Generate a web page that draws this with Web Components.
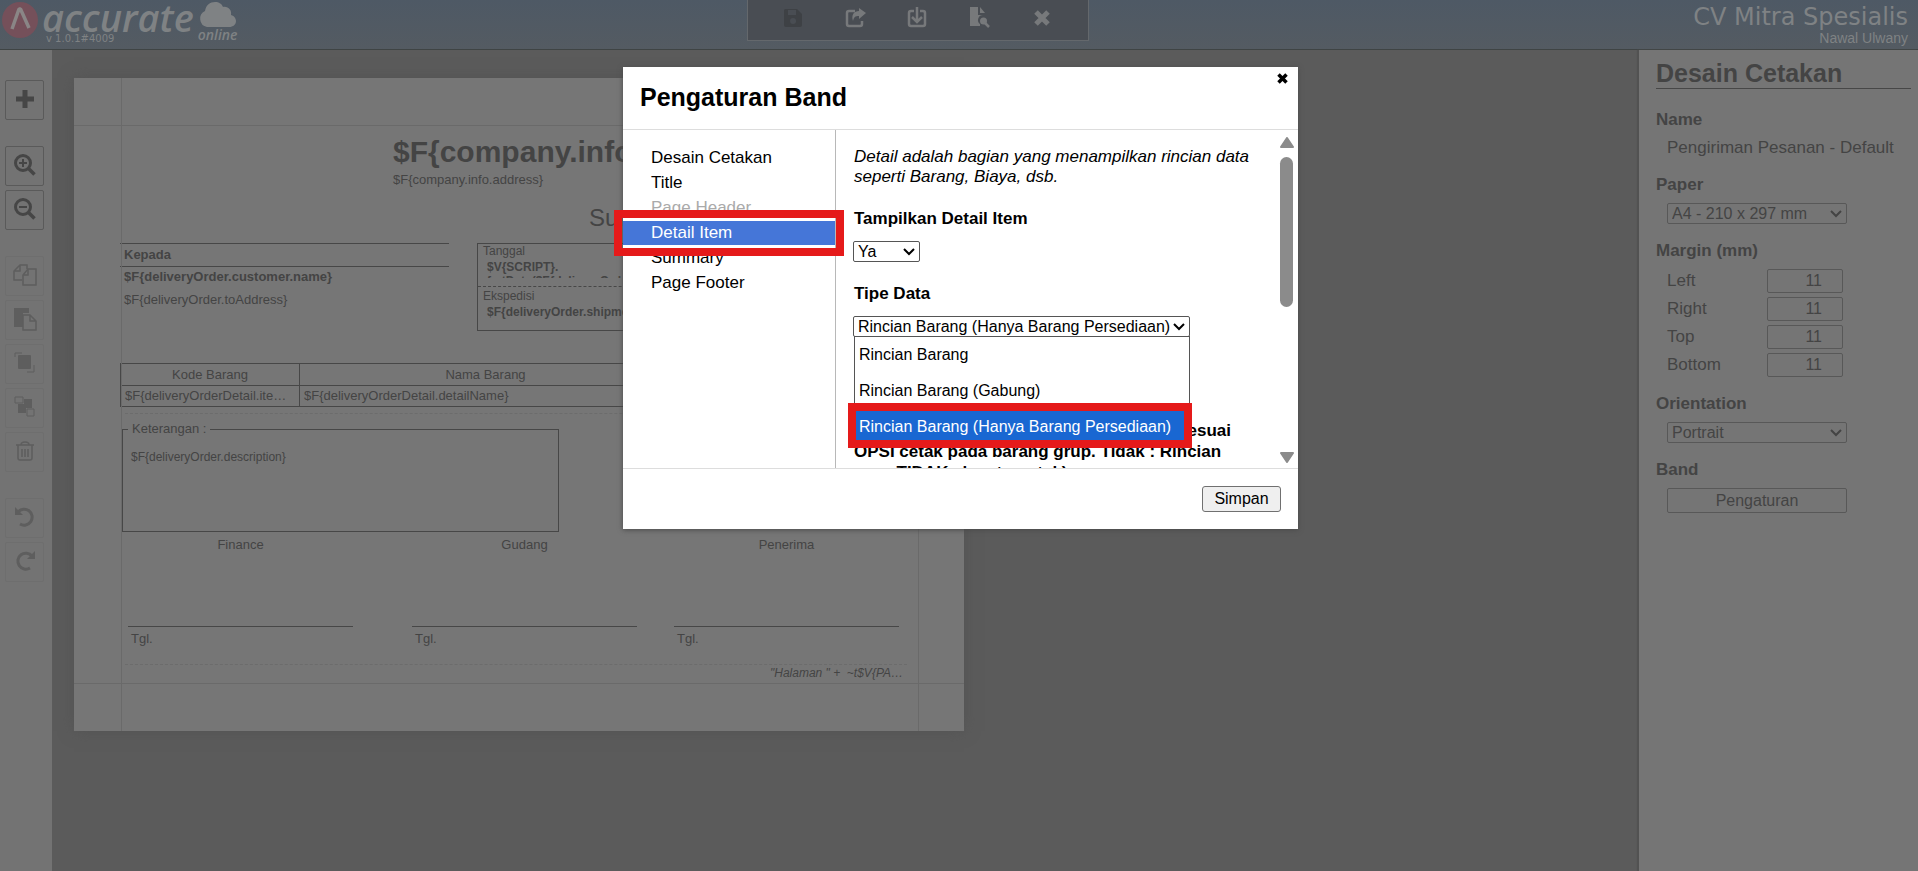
<!DOCTYPE html>
<html lang="id">
<head>
    <meta charset="UTF-8">
    <meta name="viewport" content="width=device-width, initial-scale=1.0">
    <title>Desain Cetakan</title>
    <style>
        :root {
            --tinta: #444444;
            --kertas: #767676;
            --garis: #474747;
        }

        body {
            margin: 0;
            min-height: 100vh;
            background: #5b5b5b;
            color: var(--tinta);
            font-family: "Liberation Sans", Arial, sans-serif;
            font-size: 17px;
        }
    </style>
</head>
<body>
    <halaman-desain></halaman-desain>

    <script>
        class HalamanDesain extends HTMLElement {
            constructor() {
                super();
                this._shadow = this.attachShadow({ mode: 'open' });
            }

            connectedCallback() {
                this._shadow.innerHTML = `<style>
                    :host {
                        display: flex;
                        flex-direction: column;
                        min-height: 100vh;
                    }

                    .isi {
                        flex: 1;
                        display: flex;
                    }

                    main {
                        flex: 1;
                        padding: 28px 22px;
                    }
                </style>
                <barra-atas></barra-atas>
                <div class="isi">
                    <alat-samping></alat-samping>
                    <main><kertas-cetak></kertas-cetak></main>
                    <panel-properti></panel-properti>
                </div>
                <dialog-band judul="Pengaturan Band"></dialog-band>
                `;
            }
        }

        class BarraAtas extends HTMLElement {
            constructor() {
                super();
                this._shadow = this.attachShadow({ mode: 'open' });
            }

            connectedCallback() {
                this._shadow.innerHTML = `<style>
                    :host {
                        display: grid;
                        grid-template-columns: 9fr 342px 10fr;
                        height: 49px;
                        background: linear-gradient(#4e5965, #545b62);
                        border-bottom: 1px solid #3f4444;
                        color: #7f8284;
                    }

                    .logo {
                        display: flex;
                        gap: 4px;
                        padding-left: 2px;
                    }

                    .logo > svg {
                        margin-top: 2px;
                    }

                    .merek {
                        display: flex;
                        flex-direction: column;
                    }

                    .nama {
                        font: italic 600 38px/34px "Open Sans", "Noto Sans", sans-serif;
                    }

                    .versi {
                        font: 10px/10px "DejaVu Sans", sans-serif;
                        padding-left: 4px;
                    }

                    .awan {
                        display: flex;
                        flex-direction: column;
                        padding-top: 2px;
                    }

                    .awan span {
                        font: italic 600 14px/14px "Open Sans", sans-serif;
                    }

                    nav {
                        display: flex;
                        justify-content: space-around;
                        height: 41px;
                        padding: 0 14px;
                        box-sizing: border-box;
                        background: #494d53;
                        border: 1px solid #64686c;
                        border-top: 0;
                    }

                    button {
                        width: 60px;
                        padding: 0 0 5px 0;
                        border: 0;
                        background: none;
                        color: #77797b;
                        display: flex;
                        align-items: center;
                        justify-content: center;
                    }

                    button:disabled {
                        color: #3e4145;
                    }

                    .akun {
                        text-align: right;
                        padding: 3px 10px 0 0;
                    }

                    .perusahaan {
                        font: 24px/28px "DejaVu Sans", Verdana, sans-serif;
                    }

                    .pengguna {
                        font-size: 14px;
                        line-height: 14px;
                    }
                </style>
                <div class="logo">
                    <svg width="36" height="36" viewBox="0 0 36 36"><circle cx="18" cy="18" r="18" fill="#75505a"/><path d="M10 27 17 7 18.500 7 27 26" fill="none" stroke="#8a8686" stroke-width="3.500" stroke-linejoin="bevel"/></svg>
                    <div class="merek">
                        <span class="nama">accurate</span>
                        <span class="versi">v 1.0.1#4009</span>
                    </div>
                    <div class="awan">
                        <svg width="40" height="26" viewBox="0 0 40 26"><path d="M9 25a8.500 8.500 0 0 1-2-16C8 3 12 0 17 0c4 0 7 2 8 5 5-1 9 3 8 8 7 2 7 12-2 12Z" fill="currentColor"/></svg>
                        <span>online</span>
                    </div>
                </div>
                <nav>
                    <button disabled aria-label="Simpan"><svg width="20" height="20" viewBox="0 0 20 20"><path d="M2 1h12l5 5v11a2 2 0 0 1-2 2H3a2 2 0 0 1-2-2V2Zm3 1v5h8V2Zm5 8a3 3 0 1 0 .1 6 3 3 0 0 0-.1-6Z" fill="currentColor" fill-rule="evenodd"/></svg></button>
                    <button aria-label="Bagikan"><svg width="21" height="20" viewBox="0 0 21 20"><path d="M10 3H4a2 2 0 0 0-2 2v11a2 2 0 0 0 2 2h11a2 2 0 0 0 2-2v-3" fill="none" stroke="currentColor" stroke-width="2.500"/><path d="M14 0l7 5-7 6V8c-4 0-5 1-6 5-2-6 1-10 6-10Z" fill="currentColor"/></svg></button>
                    <button aria-label="Unduh"><svg width="20" height="21" viewBox="0 0 20 21"><path d="M7 4H4a2 2 0 0 0-2 2v11a2 2 0 0 0 2 2h12a2 2 0 0 0 2-2V6a2 2 0 0 0-2-2h-3M10 0v14M5 10l5 5 5-5" fill="none" stroke="currentColor" stroke-width="2.500"/></svg></button>
                    <button aria-label="Pratinjau"><svg width="21" height="21" viewBox="0 0 21 21"><path d="M1 0h8v8h5a5 5 0 0 0-3 9v2H1Z" fill="currentColor"/><path d="M11 0l5 6h-5Z" fill="currentColor"/><circle cx="14.500" cy="14" r="3.500" fill="currentColor"/><path d="M16 16l4 4" stroke="currentColor" stroke-width="2.500"/></svg></button>
                    <button aria-label="Tutup"><svg width="18" height="18" viewBox="0 0 18 18"><path d="M3 3l12 12M15 3L3 15" stroke="currentColor" stroke-width="5"/></svg></button>
                </nav>
                <div class="akun">
                    <div class="perusahaan">CV Mitra Spesialis</div>
                    <div class="pengguna">Nawal Ulwany</div>
                </div>
                `;
            }
        }

        class AlatSamping extends HTMLElement {
            constructor() {
                super();
                this._shadow = this.attachShadow({ mode: 'open' });
            }

            connectedCallback() {
                this._shadow.innerHTML = `<style>
                    :host {
                        display: flex;
                        flex-direction: column;
                        gap: 26px;
                        width: 52px;
                        padding: 30px 0 0 5px;
                        box-sizing: border-box;
                        background: #737373;
                    }

                    .grup {
                        display: flex;
                        flex-direction: column;
                        gap: 4px;
                    }

                    button {
                        width: 39px;
                        height: 40px;
                        padding: 0 0 3px 0;
                        border: 1px solid #5a5a5a;
                        border-radius: 2px;
                        background: none;
                        color: #464646;
                        display: flex;
                        align-items: center;
                        justify-content: center;
                    }

                    button:disabled {
                        color: #5e5e5e;
                        border-color: #6e6e6e;
                    }

                    svg {
                        fill: none;
                        stroke: currentColor;
                        stroke-width: 2;
                    }
                </style>
                <div class="grup">
                    <button aria-label="Tambah"><svg width="18" height="18" viewBox="0 0 18 18"><path d="M9 0v18M0 9h18" stroke-width="5"/></svg></button>
                </div>
                <div class="grup">
                    <button aria-label="Perbesar"><svg width="22" height="22" viewBox="0 0 22 22"><circle cx="9" cy="9" r="7.500" stroke-width="3"/><path d="M14.500 14.500l6 6" stroke-width="3.500"/><path d="M9 5v8M5 9h8"/></svg></button>
                    <button aria-label="Perkecil"><svg width="22" height="22" viewBox="0 0 22 22"><circle cx="9" cy="9" r="7.500" stroke-width="3"/><path d="M14.500 14.500l6 6" stroke-width="3.500"/><path d="M5 9h8"/></svg></button>
                </div>
                <div class="grup">
                    <button disabled aria-label="Salin"><svg width="24" height="24" viewBox="0 0 24 24"><path d="M9 17H1V8l6-6h7v4M7 2v6H1M15 6h8v16H10v-10ZM15 6v6h-5" stroke-width="1.500"/></svg></button>
                    <button disabled aria-label="Tempel"><svg width="24" height="24" viewBox="0 0 24 24"><path d="M1 1h15v5h-6v14H1Z" fill="currentColor" stroke="none"/><path d="M10 8h7l6 6v9H10ZM17 8v6h6" stroke-width="1.500"/></svg></button>
                    <button disabled aria-label="Ke depan"><svg width="22" height="22" viewBox="0 0 22 22"><path d="M1 5V1h7M13 20h7v-7" stroke-width="1"/><rect x="4" y="3" width="13" height="14" rx="1" fill="currentColor" stroke="none"/></svg></button>
                    <button disabled aria-label="Ke belakang"><svg width="22" height="22" viewBox="0 0 22 22"><path d="M10 3h8v9h-6v5H4V8h6Z" fill="currentColor" stroke="none"/><path d="M1 1h8v6H1ZM13 13h7v7h-7Z" stroke-width="1"/></svg></button>
                    <button disabled aria-label="Hapus"><svg width="18" height="20" viewBox="0 0 18 20"><path d="M0 4h18M5 4c0-4 8-4 8 0M2 4v13q0 2 2 2h10q2 0 2-2V4M6 8v8M9 8v8M12 8v8" stroke-width="1.500"/></svg></button>
                </div>
                <div class="grup">
                    <button disabled aria-label="Urungkan"><svg width="22" height="22" viewBox="0 0 22 22"><path d="M4 6a8 8 0 1 1 2 12" stroke-width="3"/><path d="M1 1v8h8Z" fill="currentColor" stroke="none"/></svg></button>
                    <button disabled aria-label="Ulangi"><svg width="22" height="22" viewBox="0 0 22 22"><path d="M18 6a8 8 0 1 0-2 12" stroke-width="3"/><path d="M21 1v8h-8Z" fill="currentColor" stroke="none"/></svg></button>
                </div>
                `;
            }
        }

        class KertasCetak extends HTMLElement {
            constructor() {
                super();
                this._shadow = this.attachShadow({ mode: 'open' });
            }

            connectedCallback() {
                this._shadow.innerHTML = `<style>
                    :host {
                        display: block;
                        position: relative;
                        width: 890px;
                        height: 653px;
                        padding: 57px 45px 0 46px;
                        box-sizing: border-box;
                        background: var(--kertas);
                        box-shadow: 0 0 14px #535353;
                        font-size: 13px;
                        line-height: 16px;
                    }

                    /* garis bantu margin kertas */
                    .bantu {
                        position: absolute;
                        inset: 47px 0;
                        border: solid #6a6a6a;
                        border-width: 1px 0;
                        pointer-events: none;
                    }

                    .bantu.tegak {
                        inset: 0 45px 0 47px;
                        border-width: 0 1px;
                    }

                    .perusahaan {
                        padding-left: 273px;
                    }

                    h1 {
                        margin: 0 0 3px 0;
                        font-size: 30px;
                        line-height: 34px;
                    }

                    h2 {
                        margin: 16px 0 11px 469px;
                        font-size: 24px;
                        line-height: 28px;
                        font-weight: 400;
                    }

                    .kolom {
                        display: grid;
                        grid-template-columns: 329px 1fr;
                        gap: 28px;
                    }

                    .kepada h3 {
                        margin: 0;
                        padding: 0 4px;
                        font-size: 13px;
                        line-height: 22px;
                        border: solid var(--garis);
                        border-width: 1px 0;
                    }

                    .kepada div {
                        padding: 2px 4px 5px 4px;
                    }

                    .info {
                        border: 1px solid var(--garis);
                        height: 86px;
                        font-size: 12px;
                        line-height: 14px;
                    }

                    .info div {
                        padding-left: 5px;
                    }

                    .info .nilai {
                        padding-left: 9px;
                        margin-top: 2px;
                        font-weight: 700;
                    }

                    .info .potong {
                        width: 180px;
                        height: 18px;
                        overflow: hidden;
                    }

                    hr {
                        margin: 8px 0 2px 0;
                        border: 0;
                        border-top: 1px dashed var(--garis);
                    }

                    hr.band {
                        margin: 6px 12px 7px 5px;
                        border-color: #6c6c6c;
                    }

                    table {
                        width: 100%;
                        margin-top: 32px;
                        border-collapse: collapse;
                        table-layout: fixed;
                    }

                    th, td {
                        padding: 0 4px;
                        height: 20px;
                        font-weight: 400;
                        border: 1px solid var(--garis);
                        overflow: hidden;
                        white-space: nowrap;
                        text-overflow: ellipsis;
                    }

                    th {
                        height: 21px;
                    }

                    fieldset {
                        width: 437px;
                        height: 111px;
                        margin: 0 0 5px 2px;
                        padding: 12px 8px;
                        box-sizing: border-box;
                        border: 1px solid var(--garis);
                        font-size: 12px;
                    }

                    legend {
                        margin-left: -3px;
                        padding: 0 4px;
                        font-size: 13px;
                    }

                    .tanda {
                        display: grid;
                        grid-template-columns: 284px 262px 225px;
                        padding-left: 8px;
                        height: 121px;
                    }

                    .tanda div {
                        width: 225px;
                        text-align: center;
                    }

                    .tanda p {
                        margin: 73px 0 0 0;
                        padding: 4px 3px;
                        border-top: 1px solid var(--garis);
                        text-align: left;
                    }

                    .halaman {
                        padding-right: 16px;
                        font-size: 12px;
                        line-height: 14px;
                        font-style: italic;
                        text-align: right;
                        margin-top: -6px;
                    }
                </style>
                <div class="bantu"></div>
                <div class="bantu tegak"></div>
                <div class="perusahaan">
                    <h1>$F{company.info.name}</h1>
                    $F{company.info.address}
                </div>
                <h2>Surat Jalan</h2>
                <div class="kolom">
                    <div class="kepada">
                        <h3>Kepada</h3>
                        <div><b>$F{deliveryOrder.customer.name}</b></div>
                        <div>$F{deliveryOrder.toAddress}</div>
                    </div>
                    <div class="info">
                        <div>Tanggal</div>
                        <div class="nilai potong">$V{SCRIPT}. fmtDate($F{deliveryOrder})</div>
                        <hr>
                        <div>Ekspedisi</div>
                        <div class="nilai">$F{deliveryOrder.shipment.name}</div>
                    </div>
                </div>
                <table>
                    <colgroup><col width="179"><col width="372"><col></colgroup>
                    <tr><th>Kode Barang</th><th>Nama Barang</th><th></th></tr>
                    <tr><td>$F{deliveryOrderDetail.item.no}</td><td>$F{deliveryOrderDetail.detailName}</td><td></td></tr>
                </table>
                <hr class="band">
                <fieldset>
                    <legend>Keterangan :</legend>
                    $F{deliveryOrder.description}
                </fieldset>
                <div class="tanda">
                    <div>Finance<p>Tgl.</p></div>
                    <div>Gudang<p>Tgl.</p></div>
                    <div>Penerima<p>Tgl.</p></div>
                </div>
                <hr class="band">
                <div class="halaman">"Halaman " +&nbsp; ~t$V{PA…</div>
                `;
            }
        }

        // label dan select dalam satu elemen, isi option dari atribut "pilihan"
        class KotakPilihan extends HTMLElement {
            constructor() {
                super();
                this._shadow = this.attachShadow({ mode: 'open' });
            }

            connectedCallback() {
                this._shadow.innerHTML = `<style>
                    :host {
                        display: flex;
                        flex-direction: column;
                        align-items: flex-start;
                        gap: var(--jarak, 8px);
                    }

                    label {
                        font-weight: 700;
                        line-height: 20px;
                    }

                    .bingkai {
                        display: grid;
                        position: relative;
                        width: var(--lebar, 180px);
                        margin-left: var(--geser, 11px);
                    }

                    select, svg {
                        grid-area: 1 / 1;
                    }

                    select {
                        appearance: none;
                        width: 100%;
                        height: 21px;
                        padding: 0 4px;
                        border: 1px solid var(--tepi, #585858);
                        border-radius: 2px;
                        background: none;
                        color: inherit;
                        font-family: inherit;
                        font-size: 16px;
                        line-height: 19px;
                    }

                    svg {
                        justify-self: end;
                        align-self: center;
                        margin-right: 5px;
                        pointer-events: none;
                    }
                </style>
                <label for="pilih">${this.getAttribute('label')}</label>
                <div class="bingkai">
                    <select id="pilih">${this.opsi}</select>
                    <svg width="12" height="8" viewBox="0 0 12 8"><path d="M1 1l5 5 5-5" fill="none" stroke="currentColor" stroke-width="2"/></svg>
                    <slot></slot>
                </div>
                `;
            }

            get opsi() {
                return this.getAttribute('pilihan').split('|').map(o => `<option>${o}</option>`).join('');
            }
        }

        class PanelProperti extends HTMLElement {
            constructor() {
                super();
                this._shadow = this.attachShadow({ mode: 'open' });
            }

            connectedCallback() {
                this._shadow.innerHTML = `<style>
                    :host {
                        display: flex;
                        flex-direction: column;
                        gap: 17px;
                        width: 279px;
                        padding: 8px 7px 0 17px;
                        box-sizing: border-box;
                        background: #757575;
                        box-shadow: -2px 0 1px #525252;
                    }

                    h2 {
                        margin: 0 0 4px 0;
                        font-size: 25px;
                        line-height: 30px;
                        border-bottom: 1px solid var(--garis);
                    }

                    h3 {
                        margin: 0 0 8px 0;
                        font-size: 17px;
                        line-height: 20px;
                    }

                    .isi {
                        margin-left: 11px;
                        line-height: 20px;
                    }

                    .margin {
                        display: grid;
                        grid-template-columns: 100px 76px;
                        row-gap: 4px;
                        line-height: 24px;
                    }

                    input, button {
                        box-sizing: border-box;
                        border: 1px solid #585858;
                        border-radius: 2px;
                        background: none;
                        color: inherit;
                        font-family: inherit;
                        font-size: 16px;
                    }

                    input {
                        width: 76px;
                        height: 24px;
                        padding: 0 20px 0 4px;
                        text-align: right;
                    }

                    button {
                        display: block;
                        width: 180px;
                        height: 25px;
                        padding: 0;
                    }
                </style>
                <h2>Desain Cetakan</h2>
                <section>
                    <h3>Name</h3>
                    <div class="isi">Pengiriman Pesanan - Default</div>
                </section>
                <kotak-pilihan label="Paper" pilihan="A4 - 210 x 297 mm"></kotak-pilihan>
                <section>
                    <h3>Margin (mm)</h3>
                    <div class="isi margin">
                        <label for="kiri">Left</label><input id="kiri" value="11">
                        <label for="kanan">Right</label><input id="kanan" value="11">
                        <label for="atas">Top</label><input id="atas" value="11">
                        <label for="bawah">Bottom</label><input id="bawah" value="11">
                    </div>
                </section>
                <kotak-pilihan label="Orientation" pilihan="Portrait|Landscape"></kotak-pilihan>
                <section>
                    <h3>Band</h3>
                    <div class="isi"><button>Pengaturan</button></div>
                </section>
                `;
            }
        }

        class DialogBand extends HTMLElement {
            constructor() {
                super();
                this._shadow = this.attachShadow({ mode: 'open' });
            }

            connectedCallback() {
                this._shadow.innerHTML = `<style>
                    :host {
                        display: block;
                        position: absolute;
                        top: 67px;
                        left: calc(50% - 336px);
                        width: 675px;
                        background: #ffffff;
                        color: #000000;
                        box-shadow: 0 1px 5px #4a4a4a;
                    }

                    header {
                        display: flex;
                        justify-content: space-between;
                        align-items: flex-start;
                        padding: 6px 10px 0 17px;
                        height: 62px;
                        box-sizing: border-box;
                    }

                    h2 {
                        margin: 9px 0 0 0;
                        font-size: 25px;
                        line-height: 30px;
                    }

                    .tutup {
                        display: flex;
                        padding: 0;
                        border: 0;
                        background: none;
                    }

                    .badan {
                        display: grid;
                        grid-template-columns: 213px 1fr;
                        height: 338px;
                        border: solid #dddddd;
                        border-width: 1px 0;
                    }

                    nav {
                        display: flex;
                        flex-direction: column;
                        gap: 1px;
                        padding-top: 16px;
                        border-right: 1px solid #b8b8b8;
                    }

                    nav a {
                        position: relative;
                        padding-left: 28px;
                        line-height: 24px;
                        color: inherit;
                        text-decoration: none;
                    }

                    nav a.mati {
                        color: #aaaaaa;
                    }

                    nav a.aktif {
                        z-index: 1;
                        background: #4576d8;
                        color: #ffffff;
                    }

                    /* kotak penanda merah */
                    .tanda {
                        position: absolute;
                        border: 8px solid #e51a1a;
                        pointer-events: none;
                    }

                    nav .tanda {
                        inset: -11px -9px;
                    }

                    .panel {
                        display: flex;
                        overflow: hidden;
                    }

                    .rincian {
                        flex: 1;
                        min-width: 0;
                        height: 338px;
                        padding: 17px 15px 0 18px;
                        box-sizing: border-box;
                        --jarak: 12px;
                        --geser: -1px;
                        --tepi: #555555;
                    }

                    .rincian p {
                        margin: 0;
                        line-height: 20px;
                        font-style: italic;
                    }

                    kotak-pilihan {
                        margin-top: 22px;
                    }

                    .rincian .catatan {
                        margin-top: 83px;
                        font-style: normal;
                        font-weight: 700;
                        line-height: 21px;
                    }

                    .daftar {
                        position: absolute;
                        z-index: 1;
                        top: 20px;
                        left: 1px;
                        width: 336px;
                        box-sizing: border-box;
                        margin: 0;
                        padding: 0;
                        list-style: none;
                        background: #ffffff;
                        border: 1px solid #555555;
                        font-size: 16px;
                        line-height: 36px;
                    }

                    .daftar li {
                        position: relative;
                        padding-left: 4px;
                    }

                    .daftar .dipilih {
                        background: #1967d2;
                        color: #ffffff;
                    }

                    .daftar .tanda {
                        inset: -6px -3px -3px -7px;
                    }

                    .gulir {
                        display: flex;
                        flex-direction: column;
                        align-items: center;
                        width: 23px;
                        padding: 7px 0 5px 0;
                        box-sizing: border-box;
                    }

                    .gulir div {
                        width: 13px;
                        height: 150px;
                        margin: 9px 0 auto 0;
                        border-radius: 7px;
                        background: #8b8b8b;
                    }

                    footer {
                        display: flex;
                        justify-content: flex-end;
                        padding: 17px;
                    }

                    footer button {
                        width: 79px;
                        height: 26px;
                        padding: 0;
                        border: 1px solid #707070;
                        border-radius: 3px;
                        background: #efefef;
                        color: #000000;
                        font-family: inherit;
                        font-size: 16px;
                    }
                </style>
                <header>
                    <h2>${this.getAttribute('judul')}</h2>
                    <button class="tutup" aria-label="Tutup"><svg width="11" height="11" viewBox="0 0 11 11"><path d="M1.500 1.500l8 8M9.500 1.500l-8 8" stroke="#000000" stroke-width="3.500"/></svg></button>
                </header>
                <div class="badan">
                    <nav>
                        <a href="#desain">Desain Cetakan</a>
                        <a href="#title">Title</a>
                        <a href="#header" class="mati">Page Header</a>
                        <a href="#detail" class="aktif">Detail Item<span class="tanda"></span></a>
                        <a href="#summary">Summary</a>
                        <a href="#footer">Page Footer</a>
                    </nav>
                    <div class="panel">
                        <div class="rincian">
                            <p>Detail adalah bagian yang menampilkan rincian data seperti Barang, Biaya, dsb.</p>
                            <kotak-pilihan label="Tampilkan Detail Item" pilihan="Ya|Tidak" style="--lebar: 67px"></kotak-pilihan>
                            <kotak-pilihan label="Tipe Data" pilihan="Rincian Barang (Hanya Barang Persediaan)" style="--lebar: 337px">
                                <ul class="daftar">
                                    <li>Rincian Barang</li>
                                    <li>Rincian Barang (Gabung)</li>
                                    <li class="dipilih">Rincian Barang (Hanya Barang Persediaan)<span class="tanda"></span></li>
                                </ul>
                            </kotak-pilihan>
                            <p class="catatan">(Ya : Rincian barang grup akan tercetak sesuai OPSI cetak pada barang grup. Tidak : Rincian grup TIDAK akan tercetak)</p>
                        </div>
                        <div class="gulir">
                            <svg width="14" height="11" viewBox="0 0 14 11"><path d="M7 1l6 9H1Z" fill="#8b8b8b" stroke="#8b8b8b" stroke-linejoin="round" stroke-width="2"/></svg>
                            <div></div>
                            <svg width="14" height="11" viewBox="0 0 14 11"><path d="M1 1h12L7 10Z" fill="#8b8b8b" stroke="#8b8b8b" stroke-linejoin="round" stroke-width="2"/></svg>
                        </div>
                    </div>
                </div>
                <footer><button>Simpan</button></footer>
                `;
            }
        }

        customElements.define('kotak-pilihan', KotakPilihan);
        customElements.define('barra-atas', BarraAtas);
        customElements.define('alat-samping', AlatSamping);
        customElements.define('kertas-cetak', KertasCetak);
        customElements.define('panel-properti', PanelProperti);
        customElements.define('dialog-band', DialogBand);
        customElements.define('halaman-desain', HalamanDesain);
    </script>
</body>
</html>
